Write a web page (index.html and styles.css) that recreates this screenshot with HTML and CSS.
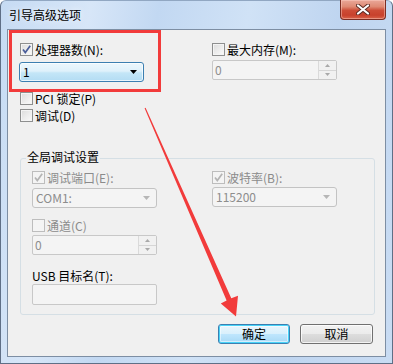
FILE: index.html
```html
<!DOCTYPE html>
<html lang="zh-CN">
<head>
<meta charset="utf-8">
<title>引导高级选项</title>
<link rel="stylesheet" href="styles.css">
</head>
<body>
<div class="window">
  <div class="titlebar">
    <span class="title">引导高级选项</span>
    <div class="close">
      <svg width="14" height="11" viewBox="0 0 14 11"><path d="M2 1.5 L12 9.5 M12 1.5 L2 9.5" stroke="#5a2a22" stroke-width="4" stroke-linecap="round"/><path d="M2 1.5 L12 9.5 M12 1.5 L2 9.5" stroke="#ffffff" stroke-width="2.2" stroke-linecap="round"/></svg>
    </div>
  </div>
  <div class="client">
    <div class="top">
      <div class="col">
        <label class="cb"><span class="box"><svg width="11" height="11" viewBox="0 0 11 11"><path d="M2 5.5 L4.3 8.6 L9.2 1.8" fill="none" stroke="#4a5e9a" stroke-width="1.7"/></svg></span>处理器数(N):</label>
        <div class="combo active"><span>1</span><svg width="7" height="4" viewBox="0 0 7 4"><path d="M0 0 H7 L3.5 4 Z" fill="#000"/></svg></div>
        <label class="cb pci"><span class="box"></span>PCI 锁定(P)</label>
        <label class="cb dbg"><span class="box"></span>调试(D)</label>
      </div>
      <div class="col">
        <label class="cb"><span class="box"></span>最大内存(M):</label>
        <div class="spin"><span class="val">0</span><span class="btns"><span class="up"><svg width="5" height="3" viewBox="0 0 5 3"><path d="M0 3 H5 L2.5 0 Z" fill="#a9a9a9"/></svg></span><span class="down"><svg width="5" height="3" viewBox="0 0 5 3"><path d="M0 0 H5 L2.5 3 Z" fill="#a9a9a9"/></svg></span></span></div>
      </div>
    </div>
    <div class="group">
      <div class="legend">全局调试设置</div>
      <div class="grow">
        <div class="col">
          <label class="cb dis"><span class="box"><svg width="11" height="11" viewBox="0 0 11 11"><path d="M2 5.5 L4.3 8.6 L9.2 1.8" fill="none" stroke="#b4b4b4" stroke-width="1.7"/></svg></span>调试端口(E):</label>
          <div class="combo disabled"><span>COM1:</span><svg width="7" height="4" viewBox="0 0 7 4"><path d="M0 0 H7 L3.5 4 Z" fill="#b6b6b6"/></svg></div>
          <label class="cb dis chan"><span class="box"></span>通道(C)</label>
          <div class="spin"><span class="val">0</span><span class="btns"><span class="up"><svg width="5" height="3" viewBox="0 0 5 3"><path d="M0 3 H5 L2.5 0 Z" fill="#a9a9a9"/></svg></span><span class="down"><svg width="5" height="3" viewBox="0 0 5 3"><path d="M0 0 H5 L2.5 3 Z" fill="#a9a9a9"/></svg></span></span></div>
          <div class="usb">USB 目标名(T):</div>
          <div class="textbox"></div>
        </div>
        <div class="col">
          <label class="cb dis"><span class="box"><svg width="11" height="11" viewBox="0 0 11 11"><path d="M2 5.5 L4.3 8.6 L9.2 1.8" fill="none" stroke="#b4b4b4" stroke-width="1.7"/></svg></span>波特率(B):</label>
          <div class="combo disabled baud"><span>115200</span><svg width="7" height="4" viewBox="0 0 7 4"><path d="M0 0 H7 L3.5 4 Z" fill="#b6b6b6"/></svg></div>
        </div>
      </div>
    </div>
    <div class="buttons">
      <div class="btn default">确定</div>
      <div class="btn">取消</div>
    </div>
  </div>
  <div class="annot-box"></div>
  <svg class="annot-arrow" width="393" height="364" viewBox="0 0 393 364">
    <polygon points="144.6,108.3 145.6,107.8 231.3,298.2 238,295.8 236,316.5 220.8,303.5 226.6,300.6" fill="#f23b3b"/>
  </svg>
</div>
</body>
</html>
```
FILE: styles.css
```css
html, body {
  margin: 0;
  padding: 0;
}
body {
  width: 393px;
  height: 364px;
  overflow: hidden;
  font-family: "Noto Sans CJK SC", "Liberation Sans", sans-serif;
  font-size: 12px;
  color: #000;
  background: #ffffff;
}
.window {
  position: relative;
  width: 393px;
  height: 364px;
  box-sizing: border-box;
  display: flex;
  flex-direction: column;
  padding: 0 6px 6px 6px;
  border: 1px solid #5f6f86;
  border-top-color: #91a7c2;
  border-radius: 6px 6px 0 0;
  background: linear-gradient(100deg, #c6dbf3 0%, #d7e6f8 20%, #c2d8f2 35%, #d0e2f6 55%, #bfd5f0 75%, #c9dcf3 100%);
}
.titlebar {
  height: 28px;
  display: flex;
  align-items: center;
  justify-content: space-between;
}
.title {
  padding-left: 2px;
  line-height: 14px;
  color: #000;
  text-shadow: 0 0 6px rgba(255,255,255,0.9);
}
.close {
  align-self: flex-start;
  margin-top: -1px;
  width: 46px;
  height: 20px;
  box-sizing: border-box;
  border: 1px solid #7b2d23;
  border-top: none;
  border-radius: 0 0 4px 4px;
  background: linear-gradient(#eaa899 0%, #df8a74 35%, #cd4c36 55%, #c8412c 80%, #d9634a 100%);
  box-shadow: inset 0 0 0 1px rgba(255,210,200,0.45);
  display: flex;
  align-items: center;
  justify-content: center;
}
.client {
  flex: 1;
  border: 1px solid #7d8ea3;
  background: #f0f0f0;
  display: flex;
  flex-direction: column;
}
.top {
  display: grid;
  grid-template-columns: 192px 1fr;
  padding: 13px 0 0 12px;
}
.col {
  display: flex;
  flex-direction: column;
  align-items: flex-start;
}
.cb {
  display: flex;
  align-items: center;
  height: 13px;
  line-height: 13px;
  white-space: nowrap;
}
.box {
  width: 13px;
  height: 13px;
  box-sizing: border-box;
  border: 1px solid #8e8f8f;
  background: linear-gradient(135deg, #dcdcdc, #fbfbfb);
  box-shadow: inset 0 0 0 1px #f4f4f4;
  margin-right: 2px;
  display: flex;
  flex: none;
}
.cb.dis {
  color: #8b8b8b;
}
.cb.dis .box {
  border-color: #bdbdbd;
  background: #f4f4f4;
  box-shadow: none;
}
.combo {
  box-sizing: border-box;
  width: 125px;
  height: 20px;
  border: 1px solid #c3c3c3;
  border-radius: 3px;
  display: flex;
  align-items: center;
  justify-content: space-between;
  padding: 0 6px 0 3px;
  margin-top: 6px;
  line-height: 16px;
}
.combo.active {
  margin-left: -1px;
  border-color: #3c7fb1;
  background: linear-gradient(#ecf7fd 0%, #dff1fb 45%, #c4e6f7 55%, #b3dcf3 100%);
  box-shadow: inset 0 0 0 1px rgba(255,255,255,0.7);
}
.combo.disabled {
  margin-top: 4px;
  background: #f4f4f4;
  color: #8d8d8d;
}
.combo.baud {
  margin-top: 3px;
  height: 20px;
}
.pci {
  margin-top: 10px;
}
.dbg {
  margin-top: 4px;
}
.spin {
  box-sizing: border-box;
  width: 125px;
  height: 20px;
  margin-top: 4px;
  border: 1px solid #c8c8c8;
  border-radius: 2px;
  background: #f4f4f4;
  color: #8d8d8d;
  display: flex;
  align-items: stretch;
}
.spin .val {
  flex: 1;
  padding-left: 2px;
  line-height: 18px;
}
.spin .btns {
  width: 17px;
  display: flex;
  flex-direction: column;
  border-left: 1px solid #dadada;
}
.spin .up, .spin .down {
  flex: 1;
  display: flex;
  align-items: center;
  justify-content: center;
  background: #f1f1f1;
}
.spin .up {
  border-bottom: 1px solid #d6d6d6;
}
.group {
  box-sizing: border-box;
  width: 355px;
  height: 157px;
  margin: 36px 0 0 12px;
  border: 1px solid #d5dfe5;
  border-radius: 3px;
  padding-left: 11px;
  display: flex;
  flex-direction: column;
  align-items: flex-start;
}
.legend {
  margin: -9px 0 0 -6px;
  padding: 0 1px;
  line-height: 14px;
  background: #f0f0f0;
}
.grow {
  display: grid;
  grid-template-columns: 180px 1fr;
  margin-top: 7px;
}
.chan {
  margin-top: 11px;
}
.grow .spin {
  margin-top: 3px;
}
.usb {
  margin-top: 14px;
  line-height: 13px;
  white-space: nowrap;
}
.textbox {
  box-sizing: border-box;
  width: 125px;
  height: 21px;
  margin-top: 2px;
  border: 1px solid #c8c8c8;
  border-radius: 2px;
  background: #f4f4f4;
}
.buttons {
  display: flex;
  justify-content: flex-end;
  gap: 10px;
  margin-top: 9px;
  padding-right: 12px;
}
.btn {
  box-sizing: border-box;
  width: 73px;
  height: 20px;
  border: 1px solid #707070;
  border-radius: 3px;
  background: linear-gradient(#f2f2f2 0%, #ebebeb 48%, #dddddd 52%, #cfcfcf 100%);
  box-shadow: inset 0 0 0 1px rgba(255,255,255,0.75);
  display: flex;
  align-items: center;
  justify-content: center;
  line-height: 16px;
}
.btn.default {
  width: 72px;
  border-color: #3c7fb1;
  box-shadow: inset 0 0 0 1px #48d3f8, inset 0 0 0 2px rgba(255,255,255,0.5);
  background: linear-gradient(#eaf6fd 0%, #d9f0fc 48%, #bee6fd 52%, #a7d9f5 100%);
}
.annot-box {
  position: absolute;
  left: 8px;
  top: 29px;
  width: 152px;
  height: 62px;
  box-sizing: border-box;
  border: 3px solid #f23b3b;
  pointer-events: none;
}
.annot-arrow {
  position: absolute;
  left: -1px;
  top: -1px;
  pointer-events: none;
}
```
